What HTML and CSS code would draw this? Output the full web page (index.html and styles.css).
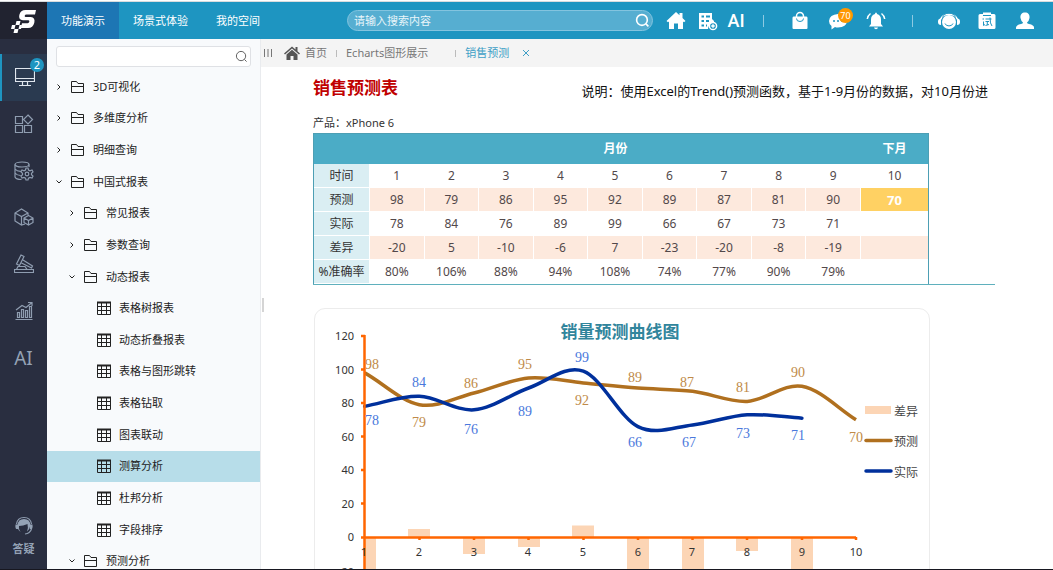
FILE: index.html
```html
<!DOCTYPE html>
<html lang="zh-CN">
<head>
<meta charset="utf-8">
<meta name="viewport" content="width=device-width, initial-scale=1">
<title>销售预测</title>
<link rel="stylesheet" href="styles.css">
</head>
<body>
<svg class="sprite" aria-hidden="true">
  <symbol id="i-folder" viewBox="0 0 14 14"><path d="M.5 12.500V1.500H5.500L7 3.500H12.500V12.500H.5M.5 6.500H12.500"/></symbol>
  <symbol id="i-grid" viewBox="0 0 14 14"><path d="M.5 1V13.500H13.500V1M.5 5.500H13.500M.5 9.500H13.500M4.500 1V13.500M9.500 1V13.500"/><path class="thick" d="M0 1.500H14"/></symbol>
  <symbol id="i-right" viewBox="0 0 8 8"><path d="M2.500 1.500L5 4L2.500 6.500"/></symbol>
  <symbol id="i-down" viewBox="0 0 8 8"><path d="M1.500 2.500L4 5L6.500 2.500"/></symbol>
  <symbol id="i-search" viewBox="0 0 14 14"><circle cx="6.500" cy="6.500" r="5"/><path d="M10.200 10.200L12.500 12.500"/></symbol>
</svg>

<header class="topbar">
  <a class="logo" href="#" aria-label="主页">
    <svg width="28" height="26" viewBox="0 0 28 26">
      <path class="fill" d="M26 2H15.500Q10.500 2 9.300 7Q8.200 12 13 12.300H18.500Q19.600 12.500 19.300 13.800Q19 15.200 17.600 15.200H12L10.800 20H18Q23 20 24.300 14.800Q25.500 9.500 20.800 9H15.500Q14.400 8.800 14.700 7.700Q15 6.400 16.500 6.400H25Z"/>
      <path class="fill" d="M6.500 13H10.500L9.500 17H5.500ZM2 17H5.500L4.500 21H1ZM9.500 17H12L11 21H8.500ZM4.500 21H8.500L7.500 25H3.500Z"/>
    </svg>
  </a>
  <nav class="nav">
    <a class="nav-item active" href="#">功能演示</a>
    <a class="nav-item" href="#">场景式体验</a>
    <a class="nav-item" href="#">我的空间</a>
  </nav>
  <div class="search">
    <input type="text" placeholder="请输入搜索内容" aria-label="搜索内容">
    <button type="button" aria-label="搜索"><svg class="line" width="15" height="15"><use href="#i-search"/></svg></button>
  </div>
  <div class="tools tight">
    <button type="button" aria-label="首页"><svg class="fill" width="22" height="22" viewBox="0 0 22 22"><path d="M11 2L1.500 11L3 12.200L4 11.500V19H9V13.500H13V19H18V11.500L19 12.200L20.500 11L17.500 8V3H14.500V5.300Z"/></svg></button>
    <button type="button" aria-label="新建报表"><svg width="22" height="22" viewBox="0 0 22 22"><path class="fill" d="M3 3H16V9L18 11V14A5 5 0 0 0 12 19H3Z"/><path class="cut" d="M5.500 6.500H8M10 6.500H14M5.500 11H8M10 11H13M5.500 15.500H8M10 15.500H11"/><circle class="ring" cx="17" cy="16" r="3.600"/><path class="line" d="M15.200 16H18.800M17 14.200V17.800"/></svg></button>
    <button type="button" class="ai">AI</button>
  </div>
  <span class="divider"></span>
  <div class="tools">
    <button type="button" aria-label="应用市场"><svg width="22" height="22" viewBox="0 0 22 22"><path class="fill" d="M4.500 6.500H17.500Q18.500 6.500 18.500 8V18Q18.500 19 17.500 19H4.500Q3.500 19 3.500 18V8Q3.500 6.500 4.500 6.500Z"/><path class="line" d="M7.500 7V6A3.500 3.500 0 0 1 14.500 6V7"/><path class="cut thin" d="M7.500 8.500A3.500 3 0 0 0 14.500 8.500"/></svg></button>
    <button type="button" class="has-badge" aria-label="消息 70"><svg width="22" height="22" viewBox="0 0 22 22"><path class="fill" d="M11 4Q20 4.500 20 11Q19.500 17 11 17.500Q9 17.500 8 17L4.500 19.500V16Q2 14 2 11Q2.500 4.500 11 4Z"/><path class="dots" d="M7 11H7.010M11 11H11.010M15 11H15.010"/></svg><span class="badge orange">70</span></button>
    <button type="button" aria-label="通知"><svg width="22" height="22" viewBox="0 0 22 22"><path class="fill" d="M10 4Q10 2.500 11 2.500T12 4Q16 5 16 9.500V14L18 16.500H4L6 14V9.500Q6 5 10 4ZM9 17.500H13Q12.700 19.200 11 19.200T9 17.500Z"/><path class="line" d="M5.500 3.500Q2.800 5.500 2.300 9M16.500 3.500Q19.200 5.500 19.700 9"/></svg></button>
  </div>
  <span class="divider"></span>
  <div class="tools">
    <button type="button" aria-label="客服"><svg width="22" height="22" viewBox="0 0 22 22"><path class="line" d="M2.500 9.500A9 8 0 0 1 19.500 9.500"/><circle class="fill" cx="11" cy="12" r="7"/><path class="fill" d="M0 11.500Q0 8.500 3 8.500V15Q0 15 0 12ZM22 11.500Q22 8.500 19 8.500V15Q22 15 22 12Z"/><path class="cut thin" d="M7 13.500A4.200 3.500 0 0 0 15 13.500M4.500 7.500A7 7 0 0 1 17.500 7.500"/></svg></button>
    <button type="button" aria-label="试用"><svg width="22" height="22" viewBox="0 0 22 22"><path class="fill" d="M4 4H7V2.500H15V4H18Q19.500 4 19.500 5.500V17.500Q19.500 19 18 19H4Q2.500 19 2.500 17.500V5.500Q2.500 4 4 4Z"/><path class="cut thin" d="M7 5.500H15M6.500 9H8M7.500 11.500V15.500L9 14.500M9.500 9H15.500M9.500 11.500H13M11.300 11.500V15M9.500 15.500L13 14.500M14 7.500Q14 14 16 16"/></svg></button>
    <button type="button" aria-label="用户"><svg class="fill" width="22" height="22" viewBox="0 0 22 22"><path d="M11 2.500C14 2.500 16 4.500 15.500 8Q15 11 13 12.500Q13 13.500 15 14Q20 15 20 17.500V19H2V17.500Q2 15 7 14Q9 13.500 9 12.500Q7 11 6.500 8C6 4.500 8 2.500 11 2.500Z"/></svg></button>
  </div>
</header>

<div class="workspace">
  <nav class="rail" aria-label="模块">
    <div class="rail-list">
      <button type="button" class="active" aria-label="演示"><svg width="20" height="20" viewBox="0 0 20 20"><path d="M.5 1.500H19.500V14.500H.5ZM.5 11.500H19.500M7.500 14.500V18M12.500 14.500V18M4 18.500H16"/></svg><span class="badge blue">2</span></button>
      <button type="button" aria-label="组件"><svg width="20" height="20" viewBox="0 0 20 20"><path d="M1.500 2.500H8.500V9.500H1.500ZM1.500 11.500H8.500V18.500H1.500ZM10.500 11.500H17.500V18.500H10.500ZM14 1L18.500 5.500L14 10L9.500 5.500Z"/></svg></button>
      <button type="button" aria-label="数据"><svg width="20" height="20" viewBox="0 0 20 20"><ellipse cx="8" cy="3.500" rx="7" ry="2.500"/><path d="M1 3.500V16Q2 18.500 7.500 18.500M15 3.500V6M1 8Q3 10.500 7 10.300M1 12Q3 14.500 6.500 14.500M12 7H14L14.500 9L16 9.800L18 9L19 10.800L17.500 12.300V13.700L19 15.200L18 17L16 16.400L14.500 17.200L14 19H12L11.500 17.200L10 16.400L8 17L7 15.200L8.500 13.700V12.300L7 10.800L8 9L10 9.800L11.500 9Z"/><circle cx="13" cy="13" r="1.800"/></svg></button>
      <button type="button" aria-label="模型"><svg width="20" height="20" viewBox="0 0 20 20"><path d="M11 17L7.500 18L1 14V6L7.500 2L14 6V8M1 6L7.500 9.500L14 6M7.500 9.500V18M14.500 8.500L19 11V15.500L14.500 18L10 15.500V11ZM10 11L14.500 13.500L19 11M14.500 13.500V18"/></svg></button>
      <button type="button" aria-label="审计"><svg width="20" height="20" viewBox="0 0 20 20"><path d="M7 1L10 2.500L5.500 11.500L2.500 10ZM9 6L18.500 12L17.500 14L7.500 9M4 12.500H11L13 15.500H2.500ZM.5 15.500H19.500V18.500H.5Z"/></svg></button>
      <button type="button" aria-label="分析"><svg width="20" height="20" viewBox="0 0 20 20"><path d="M1.500 18.500H18.500M3.500 16.500V11.500H5.500V16.500ZM7.500 16.500V8.500H9.500V16.500ZM11.500 16.500V9.500H13.500V16.500ZM15.500 16.500V5.500H17.500V16.500ZM2 9L8 4.500L12 6.500L18 1.500M14 1.500H18V5"/></svg></button>
      <button type="button" class="rail-ai">AI</button>
    </div>
    <button type="button" class="help"><svg width="20" height="20" viewBox="0 0 20 20"><path class="fill" d="M10 3Q16 3 16.500 9Q16 13 13 15.500Q14.500 12 13.500 8Q9 10 5 10Q4.500 14 7 16Q3.500 14.500 3.500 9Q4 3 10 3ZM1.500 8.500H4V13H2Q1 11 1.500 8.500ZM16 8.500H18.500Q19 11 18 13H16Z"/><path d="M2.500 8Q3.500 1.500 10 1.500T17.500 8M17.500 13Q16 17.500 11 18"/></svg>答疑</button>
  </nav>

  <aside class="sidebar">
    <div class="filter">
      <input type="text" aria-label="筛选目录">
      <svg class="line" width="13" height="13"><use href="#i-search"/></svg>
    </div>
    <nav class="tree" aria-label="目录">
      <a href="#"><svg class="arrow"><use href="#i-right"/></svg><svg class="icon"><use href="#i-folder"/></svg>3D可视化</a>
      <a href="#"><svg class="arrow"><use href="#i-right"/></svg><svg class="icon"><use href="#i-folder"/></svg>多维度分析</a>
      <a href="#"><svg class="arrow"><use href="#i-right"/></svg><svg class="icon"><use href="#i-folder"/></svg>明细查询</a>
      <a href="#"><svg class="arrow"><use href="#i-down"/></svg><svg class="icon"><use href="#i-folder"/></svg>中国式报表</a>
      <a class="l2" href="#"><svg class="arrow"><use href="#i-right"/></svg><svg class="icon"><use href="#i-folder"/></svg>常见报表</a>
      <a class="l2" href="#"><svg class="arrow"><use href="#i-right"/></svg><svg class="icon"><use href="#i-folder"/></svg>参数查询</a>
      <a class="l2" href="#"><svg class="arrow"><use href="#i-down"/></svg><svg class="icon"><use href="#i-folder"/></svg>动态报表</a>
      <a class="l3" href="#"><svg class="icon"><use href="#i-grid"/></svg>表格树报表</a>
      <a class="l3" href="#"><svg class="icon"><use href="#i-grid"/></svg>动态折叠报表</a>
      <a class="l3" href="#"><svg class="icon"><use href="#i-grid"/></svg>表格与图形跳转</a>
      <a class="l3" href="#"><svg class="icon"><use href="#i-grid"/></svg>表格钻取</a>
      <a class="l3" href="#"><svg class="icon"><use href="#i-grid"/></svg>图表联动</a>
      <a class="l3 selected" href="#"><svg class="icon"><use href="#i-grid"/></svg>测算分析</a>
      <a class="l3" href="#"><svg class="icon"><use href="#i-grid"/></svg>杜邦分析</a>
      <a class="l3" href="#"><svg class="icon"><use href="#i-grid"/></svg>字段排序</a>
      <a class="l2" href="#"><svg class="arrow"><use href="#i-down"/></svg><svg class="icon"><use href="#i-folder"/></svg>预测分析</a>
    </nav>
  </aside>

  <main class="main">
    <div class="tabs">
      <button type="button" class="collapse" aria-label="收起目录"><svg width="8" height="8" viewBox="0 0 8 8"><path d="M.5 0V8M4 0V8M7.500 0V8"/></svg></button>
      <a class="home" href="#"><svg width="16" height="14" viewBox="0 0 16 14"><path d="M8 .5L0 7.500L1 8.500L8 2.500L15 8.500L16 7.500L13.500 5.300V1H11.500V3.500ZM8 3.800L2.500 8.500V14H6.500V10H9.500V14H13.500V8.500Z"/></svg>首页</a>
      <span class="tab-sep"></span>
      <a class="tab" href="#">Echarts图形展示</a>
      <span class="tab-sep"></span>
      <a class="tab current" href="#">销售预测</a>
      <button type="button" class="close" aria-label="关闭"><svg width="8" height="8" viewBox="0 0 8 8"><path d="M1 1L7 7M7 1L1 7"/></svg></button>
    </div>
    <div class="content">
      <div class="grip"></div>
      <section class="sheet">
        <div class="sheet-head">
          <h1>销售预测表</h1>
          <p class="note">说明：使用Excel的Trend()预测函数，基于1-9月份的数据，对10月份进</p>
        </div>
        <p class="product">产品：xPhone 6</p>
        <div class="table-wrap">
          <table>
            <colgroup><col class="c-label"><col span="9"><col class="c-next"></colgroup>
            <thead><tr><th></th><th colspan="9">月份</th><th>下月</th></tr></thead>
            <tbody>
              <tr><th scope="row">时间</th><td>1</td><td>2</td><td>3</td><td>4</td><td>5</td><td>6</td><td>7</td><td>8</td><td>9</td><td>10</td></tr>
              <tr class="tint"><th scope="row">预测</th><td>98</td><td>79</td><td>86</td><td>95</td><td>92</td><td>89</td><td>87</td><td>81</td><td>90</td><td class="forecast">70</td></tr>
              <tr><th scope="row">实际</th><td>78</td><td>84</td><td>76</td><td>89</td><td>99</td><td>66</td><td>67</td><td>73</td><td>71</td><td></td></tr>
              <tr class="tint"><th scope="row">差异</th><td>-20</td><td>5</td><td>-10</td><td>-6</td><td>7</td><td>-23</td><td>-20</td><td>-8</td><td>-19</td><td></td></tr>
              <tr><th scope="row">%准确率</th><td>80%</td><td>106%</td><td>88%</td><td>94%</td><td>108%</td><td>74%</td><td>77%</td><td>90%</td><td>79%</td><td></td></tr>
            </tbody>
          </table>
        </div>
        <div class="chart">
          <svg viewBox="315 309 614 300" role="img" aria-label="销量预测曲线图">
            <text class="c-title" x="620" y="338">销量预测曲线图</text>
            <g class="bars">
              <path d="M365 537H376V571H365ZM408 529H430V537H408ZM463 537H485V554H463ZM518 537H540V547H518ZM572 525.500H594V537H572ZM627 537H649V576H627ZM682 537H704V571H682ZM736 537H758V551H736ZM791 537H813V569H791Z"/>
            </g>
            <path class="s-forecast" d="M364.700 372.900C382.900 383 401.100 401.300 419.300 404.700S455.800 397.500 474 393S510.400 379.600 528.600 377.900S565.100 381.200 583.300 382.900S619.700 386.600 637.900 388S674.400 389.100 692.600 391.300S729 402.200 747.200 401.400S783.700 383.200 801.900 386.300S838.300 408.600 856 419.800"/>
            <path class="s-actual" d="M364.700 406.400C382.900 403 401.100 395.700 419.300 396.300S455.800 411.200 474 409.800S510.400 394.400 528.600 388S565.100 364.800 583.300 371.200S619.700 417.600 637.900 426.600S674.400 426.900 692.600 424.900S729 415.900 747.200 414.800S783.700 417 801.900 418.200"/>
            <path class="axis" d="M364.500 335V604M364 537.500H856M361 336H365M361 369.500H365M361 403H365M361 436.500H365M361 470H365M361 503.500H365M361 537.500H365M361 571H365M419.500 537V540M474 537V540M528.500 537V540M583.500 537V540M638 537V540M692.500 537V540M747 537V540M802 537V540M856 537V540"/>
            <g class="y-labels">
              <text x="354" y="340">120</text><text x="354" y="374">100</text><text x="354" y="407">80</text><text x="354" y="441">60</text><text x="354" y="474">40</text><text x="354" y="508">20</text><text x="354" y="541">0</text><text x="354" y="576">-20</text>
            </g>
            <g class="x-labels">
              <text x="364" y="556">1</text><text x="419" y="556">2</text><text x="474" y="556">3</text><text x="528" y="556">4</text><text x="583" y="556">5</text><text x="638" y="556">6</text><text x="692" y="556">7</text><text x="747" y="556">8</text><text x="802" y="556">9</text><text x="856" y="556">10</text>
            </g>
            <g class="v-forecast">
              <text x="372" y="369">98</text><text x="419" y="427">79</text><text x="471" y="388">86</text><text x="525" y="369">95</text><text x="582" y="405">92</text><text x="635" y="382">89</text><text x="687" y="387">87</text><text x="743" y="392">81</text><text x="798" y="377">90</text><text x="856" y="442">70</text>
            </g>
            <g class="v-actual">
              <text x="372" y="425">78</text><text x="419" y="387">84</text><text x="471" y="434">76</text><text x="525" y="416">89</text><text x="582" y="362">99</text><text x="635" y="447">66</text><text x="689" y="447">67</text><text x="743" y="438">73</text><text x="798" y="440">71</text>
            </g>
            <path class="k-bar" d="M865 406H891V414H865Z"/>
            <path class="s-forecast key" d="M866 440.500H891"/>
            <path class="s-actual key" d="M866 471H891"/>
            <g class="legend"><text x="894" y="416">差异</text><text x="894" y="446">预测</text><text x="894" y="477">实际</text></g>
          </svg>
        </div>
      </section>
    </div>
  </main>
</div>
</body>
</html>
```
FILE: styles.css
```css
* { box-sizing: border-box; }

body {
  margin: 0;
  height: 100vh;
  display: flex;
  flex-direction: column;
  overflow: hidden;
  border-top: 1px solid #fff;
  border-bottom: 1px solid #171720;
  background: #fff;
  color: #333;
  font: 11px/16px "Noto Sans", "Noto Sans CJK SC", sans-serif;
}

button, input { font: inherit; color: inherit; border: 0; padding: 0; background: none; }
a { color: inherit; text-decoration: none; }
svg { display: block; flex: none; }
h1, p { margin: 0; }
.sprite { position: absolute; width: 0; height: 0; }

/* Top bar */
.topbar {
  flex: none;
  display: flex;
  align-items: center;
  height: 38px;
  padding-right: 17px;
  border-top: 1px solid #d9dcde;
  background: #1e95c1;
  color: #fff;
}
.logo {
  width: 47px;
  align-self: stretch;
  display: flex;
  align-items: center;
  justify-content: center;
  background: #212330;
}
.logo .fill, .topbar .fill { fill: #fff; }
.nav { display: flex; align-self: stretch; }
.nav-item { display: flex; align-items: center; padding: 0 14px; white-space: nowrap; }
.nav-item.active { background: #1d76b4; }
.search {
  flex: 1;
  min-width: 120px;
  display: flex;
  align-items: center;
  height: 21px;
  margin: 0 12px 0 73px;
  padding: 0 2px 0 6px;
  border: 1px solid #83c4df;
  border-radius: 11px;
  background: #56aed1;
}
.search input { flex: 1; min-width: 0; outline: 0; }
.search input::placeholder { color: #e8f5fa; opacity: 1; }
.line { fill: none; stroke: #fff; stroke-width: 1.5; }
.cut { fill: none; stroke: #1e95c1; stroke-width: 2; }
.cut.thin { stroke-width: 1; }
.ring { fill: #1e95c1; stroke: #fff; stroke-width: 1.5; }
.dots { stroke: #1e95c1; stroke-width: 2; stroke-linecap: round; }
.tools { display: flex; align-items: center; gap: 16px; }
.tools.tight { gap: 9px; }
.tools button { display: block; }
.tools .ai { width: 18px; font: 500 18px/22px Roboto, sans-serif; }
.divider { width: 1px; height: 12px; margin: 0 25px; background: #8ecae2; }
.tight + .divider { margin-left: 18px; }
.badge {
  position: absolute;
  border-radius: 8px;
  color: #fff;
  text-align: center;
}
.has-badge { position: relative; }
.badge.orange { top: -2px; right: -4px; width: 15px; height: 15px; font-size: 9px; line-height: 15px; background: #ff9800; }
.badge.blue { top: 4px; right: 3px; width: 14px; height: 14px; font-size: 11px; line-height: 14px; background: #1e95c1; }

/* Workspace */
.workspace { flex: 1; min-height: 0; display: flex; }
.rail {
  flex: none;
  width: 47px;
  display: flex;
  flex-direction: column;
  justify-content: space-between;
  padding: 15px 0 12px;
  background: #292e40;
  color: #94a2b5;
}
.rail-list { display: grid; grid-auto-rows: 1fr; height: 327px; }
.rail-list button { position: relative; display: flex; align-items: center; justify-content: center; }
.rail svg { fill: none; stroke: #8f9db0; stroke-width: 1.2; }
.rail .active { background: #2a3a50; border-left: 2px solid #1e95c1; }
.rail .active svg { stroke: #dfe6ee; }
.rail .rail-ai { font-size: 19px; }
.help { display: flex; flex-direction: column; align-items: center; gap: 5px; font-weight: 700; }
.help .fill { fill: #94a2b5; stroke: none; }

.sidebar {
  flex: none;
  width: 214px;
  display: flex;
  flex-direction: column;
  padding-top: 7px;
  border-right: 1px solid #e9ebee;
  background: #f8fafc;
  color: #222;
}
.filter {
  flex: none;
  display: flex;
  align-items: center;
  height: 21px;
  margin: 0 9px 4px;
  padding: 0 2px;
  border: 1px solid #dfe1e5;
  border-radius: 3px;
  background: #fff;
}
.filter input { flex: 1; min-width: 0; outline: 0; }
.filter .line { stroke: #555; stroke-width: 1; }
.tree { flex: 1; display: grid; grid-auto-rows: 1fr; margin-bottom: -8px; }
.tree a { display: flex; align-items: center; padding-left: 8px; white-space: nowrap; }
.tree .l2 { padding-left: 21px; }
.tree .l3 { padding-left: 50px; }
.tree .selected { background: #b7dde9; }
.tree svg { fill: none; stroke: #222; }
.tree .arrow { width: 8px; height: 8px; margin-right: 8px; }
.tree .icon { width: 14px; height: 14px; margin-right: 8px; }
.thick { stroke-width: 2; }

/* Main area */
.main { flex: 1; min-width: 0; display: flex; flex-direction: column; }
.tabs {
  flex: none;
  display: flex;
  align-items: center;
  height: 28px;
  padding-left: 3px;
  background: #f4f4f4;
  color: #777;
  white-space: nowrap;
}
.tabs path { fill: none; stroke: #777; }
.home { display: flex; align-items: center; gap: 5px; margin-left: 12px; }
.home path { fill: #555; stroke: none; }
.tab-sep { width: 1px; height: 7px; margin: 0 9px; background: #bbb; }
.tab + .tab-sep { margin-left: 27px; }
.current { color: #3f9fc6; }
.tabs .close { margin-left: 13px; }
.close path { stroke: #3f9fc6; }

.content { flex: 1; min-height: 0; display: flex; overflow: hidden; }
.grip { flex: none; width: 2px; height: 14px; margin: 117px 49px 0 1px; margin-top: -26px; align-self: center; background: #d5d5d5; }
.sheet { flex: 1; min-width: 0; padding-right: 58px; }
.sheet-head { display: flex; justify-content: space-between; align-items: center; height: 42px; }
.sheet h1 { color: #c00000; font-size: 17px; line-height: 24px; white-space: nowrap; }
.note { padding: 5px 7px 0 0; color: #111; font-size: 13px; white-space: nowrap; }
.product { margin: 6px 0 2px; font-size: 11px; }
.table-wrap { border-bottom: 1px solid #5fb0bd; }
.table-wrap, .chart { font-size: 12px; }
table {
  width: calc(100% - 66px);
  table-layout: fixed;
  border: 1px solid #4d9fb4;
  border-bottom: 0;
  border-spacing: 0;
  line-height: 16px;
  color: #52484a;
  text-align: center;
}
.c-label { width: 56px; }
.c-next { width: 67px; }
th, td { height: 24px; padding: 0; border: solid #fff; border-width: 0 1px 1px 0; font-weight: 400; white-space: nowrap; }
td:last-child { border-right: 0; }
thead th { height: 30px; border: 0; background: #4bacc6; color: #fff; font-weight: 700; }
tbody th { background: #daeef3; color: #333; }
.tint td { background: #fde9dd; }
.tint .forecast { background: #ffd163; color: #fff; font-size: 13px; font-weight: 700; }

.chart {
  margin: 23px 65px 0 1px;
  border: 1px solid #ececec;
  border-radius: 11px;
}
.chart svg { width: 100%; height: auto; }
.c-title { fill: #31859c; font-size: 17px; font-weight: 700; text-anchor: middle; }
.bars, .k-bar { fill: #fcd5b5; }
.s-forecast, .s-actual { fill: none; stroke: #b0701f; stroke-width: 3.500; }
.s-actual { stroke: #00309c; stroke-linecap: round; }
.key { stroke-linecap: round; }
.axis { fill: none; stroke: #ff6600; stroke-width: 2.500; }
.y-labels, .x-labels { fill: #333; font-size: 11px; text-anchor: end; }
.x-labels { text-anchor: middle; }
.v-forecast, .v-actual { font: 14px "Liberation Serif", serif; text-anchor: middle; fill: #c08a48; }
.v-actual { fill: #4a78dc; }
.legend { fill: #444; }
```
